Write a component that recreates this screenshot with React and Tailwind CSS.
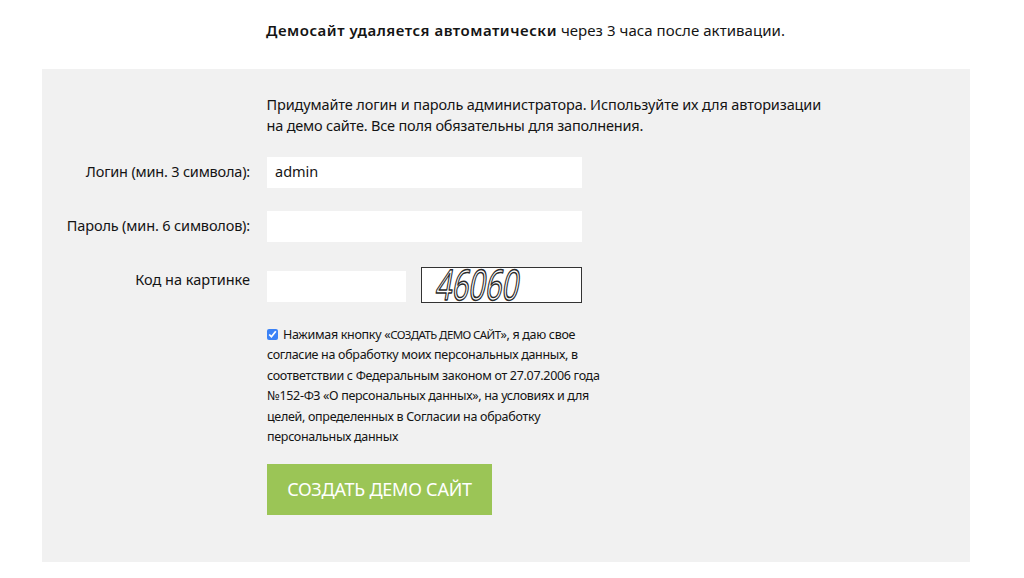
export default function App() {
  return (
    <div className="w-[1024px] h-[578px] overflow-hidden bg-white text-[#141414] font-['Noto_Sans',sans-serif]">
      <p className="pl-[266px] pt-[20px] h-[69px] text-[15px] leading-[21px] tracking-[0.05px]">
        <b className="font-semibold tracking-[0.53px]">Демосайт удаляется автоматически</b> через 3 часа после активации.
      </p>
      <div className="ml-[42px] w-[928px] h-[493px] bg-[#f1f1f1] pt-[25px]">
        <p className="ml-[224.5px] w-[600px] text-[14.5px] leading-[21px] tracking-[-0.125px]">
          Придумайте логин и пароль администратора. Используйте их для авторизации<br /><span className="tracking-[-0.2px]">на демо сайте. Все поля обязательны для заполнения.</span>
        </p>
        <div className="mt-[21px] grid grid-cols-[208px_1fr] gap-x-[17px] text-[14.5px] tracking-[-0.15px]">
          <label className="text-right h-[31px] leading-[29px] tracking-[-0.2px]">Логин (мин. 3 символа):</label>
          <div className="w-[315px] h-[31px] bg-white pl-[8px] leading-[28px] tracking-[0px]">admin</div>
          <label className="mt-[23px] text-right h-[31px] leading-[29px]">Пароль (мин. 6 символов):</label>
          <div className="mt-[23px] w-[315px] h-[31px] bg-white"></div>
          <label className="mt-[24px] text-right leading-[26px] tracking-[0px]">Код на картинке</label>
          <div className="mt-[25px] flex items-center gap-[15px]">
            <div className="w-[139px] h-[31px] mt-[3px] bg-white"></div>
            <div className="w-[161px] h-[36px] bg-white border border-[#333]">
              <svg viewBox="0 0 159 34" className="w-[159px] h-[34px] block overflow-visible">
                <text x="18" y="32" fontFamily="'Open Sans', sans-serif" fontSize="42" fill="white" stroke="#2a2a2a" strokeWidth="1.5" strokeLinejoin="round" textLength="83" lengthAdjust="spacingAndGlyphs" transform="skewX(-10)">46060</text>
              </svg>
            </div>
          </div>
        </div>
        <div className="ml-[225px] mt-[21.5px] w-[345px] text-[12.5px] leading-[20.6px] tracking-[-0.31px]">
          <input type="checkbox" defaultChecked className="w-[11px] h-[11px] mr-[5px] align-[-1px] accent-[#3b82f6]" />
          Нажимая кнопку «<span className="text-[11.5px] tracking-[-0.6px]">СОЗДАТЬ ДЕМО САЙТ</span>», я даю свое<br />согласие на обработку моих персональных данных, в<br />соответствии с Федеральным законом от 27.07.2006 года<br />№152-ФЗ «О персональных данных», на условиях и для<br />целей, определенных в Согласии на обработку<br />персональных данных
        </div>
        <button className="ml-[225px] mt-[16px] block w-[225px] h-[51px] bg-[#9bc556] text-white text-[18px] tracking-[-0.22px] text-center">СОЗДАТЬ ДЕМО САЙТ</button>
      </div>
    </div>
  );
}
